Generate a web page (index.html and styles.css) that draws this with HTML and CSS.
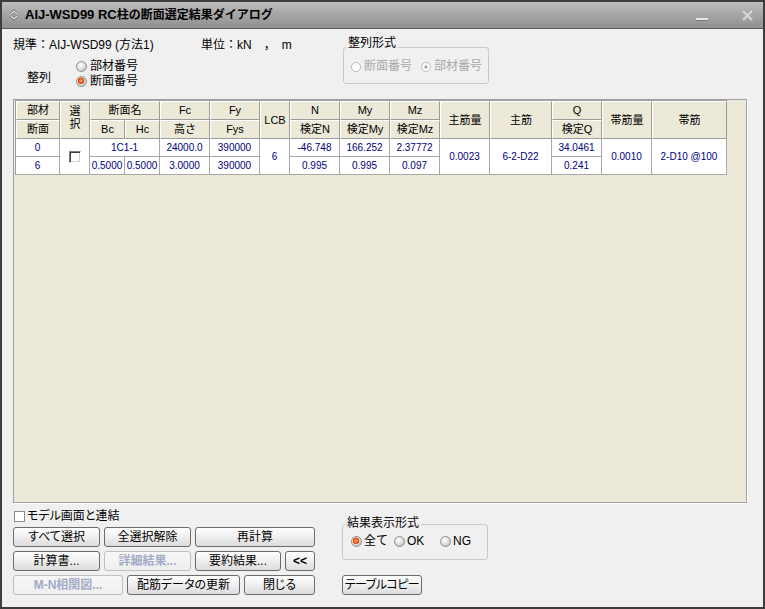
FILE: index.html
```html
<!DOCTYPE html>
<html lang="ja">
<head>
<meta charset="utf-8">
<title>AIJ-WSD99 RC柱の断面選定結果ダイアログ</title>
<link rel="stylesheet" href="styles.css">
</head>
<body>
<div class="window">
  <div class="titlebar">
    <svg class="title-icon" viewBox="0 0 8 12" aria-hidden="true">
      <path d="M1 5L4 2L7 5M1 7L4 10L7 7" fill="none" stroke="#5e5e5e" stroke-width="2.4"/>
      <path d="M1 5L4 2L7 5M1 7L4 10L7 7" fill="none" stroke="#f0f0f0" stroke-width="1.1"/>
    </svg>
    <span class="title-text"><span class="title-lat">AIJ-WSD99 RC</span><span class="title-jp">柱の断面選定結果ダイアログ</span></span>
    <svg class="tb-min" viewBox="0 0 12 12" aria-hidden="true">
      <rect x="0" y="9" width="12" height="2" fill="#e4e4e4"/>
      <rect x="0" y="11" width="12" height="1" fill="#7c7c7c"/>
    </svg>
    <svg class="tb-close" viewBox="0 0 11 11" aria-hidden="true">
      <path d="M1 1L10 10M10 1L1 10" stroke="#c4c4c4" stroke-width="3.4" opacity=".5"/>
      <path d="M1 1L10 10M10 1L1 10" stroke="#dedede" stroke-width="1.5"/>
    </svg>
  </div>

  <div class="content">
    <div class="top">
      <div class="top-left">
        <div class="info-row">
          <span class="std">規準：AIJ-WSD99 (方法1)</span>
          <span>単位：kN　，　m</span>
        </div>
        <div class="sort-row">
          <span class="sort-label">整列</span>
          <div class="radio-col">
            <span class="opt"><span class="radio"></span>部材番号</span>
            <span class="opt"><span class="radio on"></span>断面番号</span>
          </div>
        </div>
      </div>
      <div class="group group-sort">
        <span class="group-title">整列形式</span>
        <div class="radio-grid sort-grid">
          <span class="opt dis"><span class="radio dis"></span>断面番号</span>
          <span class="opt dis"><span class="radio dis on"></span>部材番号</span>
        </div>
      </div>
    </div>

    <div class="grid-area">
      <table class="grid">
        <colgroup>
          <col class="c-id"><col class="c-sel"><col class="c-b"><col class="c-b">
          <col class="c-50"><col class="c-50"><col class="c-lcb"><col class="c-50">
          <col class="c-50"><col class="c-50"><col class="c-50"><col class="c-main">
          <col class="c-50"><col class="c-50"><col class="c-hoop">
        </colgroup>
        <thead>
          <tr>
            <th>部材</th>
            <th rowspan="2" class="th-sel">選<br>択</th>
            <th colspan="2">断面名</th>
            <th>Fc</th>
            <th>Fy</th>
            <th rowspan="2">LCB</th>
            <th>N</th>
            <th>My</th>
            <th>Mz</th>
            <th rowspan="2">主筋量</th>
            <th rowspan="2">主筋</th>
            <th>Q</th>
            <th rowspan="2">帯筋量</th>
            <th rowspan="2">帯筋</th>
          </tr>
          <tr>
            <th>断面</th>
            <th>Bc</th>
            <th>Hc</th>
            <th>高さ</th>
            <th>Fys</th>
            <th>検定N</th>
            <th>検定My</th>
            <th>検定Mz</th>
            <th>検定Q</th>
          </tr>
        </thead>
        <tbody>
          <tr>
            <td>0</td>
            <td rowspan="2"><span class="cb"></span></td>
            <td colspan="2">1C1-1</td>
            <td>24000.0</td>
            <td>390000</td>
            <td rowspan="2">6</td>
            <td>-46.748</td>
            <td>166.252</td>
            <td>2.37772</td>
            <td rowspan="2">0.0023</td>
            <td rowspan="2">6-2-D22</td>
            <td>34.0461</td>
            <td rowspan="2">0.0010</td>
            <td rowspan="2">2-D10 @100</td>
          </tr>
          <tr>
            <td>6</td>
            <td>0.5000</td>
            <td>0.5000</td>
            <td>3.0000</td>
            <td>390000</td>
            <td>0.995</td>
            <td>0.995</td>
            <td>0.097</td>
            <td>0.241</td>
          </tr>
        </tbody>
      </table>
    </div>

    <div class="bottom">
      <div class="bottom-left">
        <label class="check-row"><span class="check"></span>モデル画面と連結</label>
        <div class="btn-rows">
          <div class="btn-row">
            <button class="btn w87">すべて選択</button>
            <button class="btn w87">全選択解除</button>
            <button class="btn w120">再計算</button>
          </div>
          <div class="btn-row">
            <button class="btn w87">計算書...</button>
            <button class="btn w87" disabled>詳細結果...</button>
            <button class="btn w86">要約結果...</button>
            <button class="btn w30 btn-back">&lt;&lt;</button>
          </div>
          <div class="btn-row">
            <button class="btn w110" disabled>M-N相関図...</button>
            <button class="btn w113">配筋データの更新</button>
            <button class="btn w71">閉じる</button>
          </div>
        </div>
      </div>
      <div class="bottom-right">
        <div class="group group-result">
          <span class="group-title">結果表示形式</span>
          <div class="radio-grid result-grid">
            <span class="opt"><span class="radio on"></span>全て</span>
            <span class="opt"><span class="radio"></span>OK</span>
            <span class="opt"><span class="radio"></span>NG</span>
          </div>
        </div>
        <button class="btn btn-copy">テーブルコピー</button>
      </div>
    </div>
  </div>
</div>
</body>
</html>
```

FILE: styles.css
```css
* { box-sizing: border-box; }

body {
  margin: 0;
  font-family: "Liberation Sans", "Noto Sans CJK JP", sans-serif;
  font-size: 12px;
  color: #000;
  background: #fff;
}

.window {
  width: 765px;
  height: 609px;
  border: 2px solid #3d3d3d;
  background: #f0f0f0;
  display: flex;
  flex-direction: column;
  overflow: hidden;
}

/* ---------- title bar ---------- */
.titlebar {
  height: 27px;
  flex: none;
  display: flex;
  align-items: center;
  padding-left: 8px;
  background: linear-gradient(#bebebe, #a7a7a7 45%, #909090);
  border-bottom: 1px solid #5c5c5c;
}
.title-icon { width: 8px; height: 12px; margin-right: 7px; flex: none; }
.title-text {
  flex: 1;
  font-weight: bold;
  line-height: 16px;
  white-space: nowrap;
}
.title-lat { font-size: 13px; }
.title-jp { font-size: 12px; }
.tb-min { width: 12px; height: 12px; margin-right: 34px; flex: none; }
.tb-close { width: 11px; height: 11px; margin-right: 10px; flex: none; }

/* ---------- content ---------- */
.content {
  flex: 1;
  display: flex;
  flex-direction: column;
  padding: 0 16px 0 11px;
}

.top { height: 70px; display: flex; flex: none; }
.top-left { width: 330px; }
.info-row { display: flex; margin-top: 8px; line-height: 16px; white-space: nowrap; }
.std { width: 188px; }
.sort-row { display: flex; margin-top: 6px; }
.sort-label { width: 63px; padding: 12px 0 0 14px; line-height: 15px; }
.radio-col { display: flex; flex-direction: column; }

.opt {
  display: flex;
  align-items: center;
  line-height: 15px;
  white-space: nowrap;
}
.opt.dis { color: #a9a9a9; }

.radio {
  width: 11px;
  height: 11px;
  flex: none;
  margin-right: 3px;
  border-radius: 50%;
  border: 1px solid #8e8e8e;
  background: radial-gradient(circle at 40% 35%, #ffffff 0, #e2e2e2 45%, #b4b4b4 100%);
}
.radio.on {
  background:
    radial-gradient(circle at 45% 42%, #ffb48a 0, #f0601e 2px, #d9480f 3px, rgba(217,72,15,0) 3.6px),
    radial-gradient(circle at 40% 35%, #ffffff 0, #e2e2e2 45%, #b4b4b4 100%);
}
.radio.dis {
  width: 10px;
  height: 10px;
  border-color: #b9b9b9;
  background: #fff;
}
.radio.dis.on {
  background: radial-gradient(circle, #9ea4b8 0, #9ea4b8 1.3px, rgba(158,164,184,0) 2px), #fff;
}

/* group boxes */
.group {
  border: 1px solid #c9c9c9;
  border-radius: 3px;
}
.group-title {
  display: block;
  width: max-content;
  padding: 0 2px;
  background: #f0f0f0;
  line-height: 14px;
  white-space: nowrap;
}
.radio-grid { display: grid; }

.group-sort {
  width: 146px;
  align-self: flex-start;
  margin-top: 18px;
  padding: 0 0 9px 7px;
}
.group-sort .group-title { margin: -12px 0 0 -5px; }
.sort-grid { grid-template-columns: 70px auto; margin-top: 9px; }

/* ---------- grid ---------- */
.grid-area {
  flex: none;
  height: 404px;
  border: 1px solid #a0a0a0;
  box-shadow: 1px 1px 0 #ffffff;
  background: #ece9d8;
  padding: 0 0 0 1px;
}
.grid {
  border-collapse: separate;
  border-spacing: 0;
  table-layout: fixed;
  width: 712px;
  border-top: 1px solid #a0a0a0;
  border-left: 1px solid #a0a0a0;
}
.c-id { width: 44px; }
.c-sel { width: 30px; }
.c-b { width: 35px; }
.c-50 { width: 50px; }
.c-lcb { width: 30px; }
.c-main { width: 62px; }
.c-hoop { width: 75px; }

.grid th {
  background: #ece9d8;
  border-style: solid;
  border-width: 1px;
  border-color: #ffffff #9b9b9b #9b9b9b #ffffff;
  font-weight: normal;
  font-size: 11px;
  line-height: 13px;
  padding: 2px 0;
  text-align: center;
  vertical-align: middle;
  white-space: nowrap;
  overflow: hidden;
}
.grid th.th-sel { vertical-align: top; padding-top: 3px; }

.grid td {
  background: #ffffff;
  border-right: 1px solid #a8a8a8;
  border-bottom: 1px solid #a8a8a8;
  color: #000080;
  font-size: 10px;
  line-height: 13px;
  padding: 2px 0;
  text-align: center;
  vertical-align: middle;
  white-space: nowrap;
  overflow: hidden;
}
.cb {
  display: inline-block;
  width: 12px;
  height: 12px;
  vertical-align: middle;
  border: 1px solid;
  border-color: #808080 #ffffff #ffffff #808080;
  box-shadow: inset 1px 1px 0 #404040, inset -1px -1px 0 #d4d0c8;
  background: #ffffff;
}

/* ---------- bottom ---------- */
.bottom { display: flex; margin-top: 6px; flex: none; }
.bottom-left { width: 302px; display: flex; flex-direction: column; }
.check-row {
  display: flex;
  align-items: center;
  height: 15px;
  padding-left: 1px;
  line-height: 15px;
  white-space: nowrap;
  font-feature-settings: "palt";
}
.check {
  width: 11px;
  height: 11px;
  flex: none;
  margin-right: 2px;
  border: 1px solid #8a8a8a;
  background: #ffffff;
}
.btn-rows { display: flex; flex-direction: column; gap: 4px; margin-top: 3px; }
.btn-row { display: flex; gap: 4px; }

.btn {
  height: 20px;
  padding: 0;
  font-family: inherit;
  font-size: 12px;
  line-height: 18px;
  color: #000;
  border: 1px solid #6b6b6b;
  border-radius: 3px;
  background: linear-gradient(#ffffff, #efefef 50%, #dcdcdc);
  white-space: nowrap;
  font-feature-settings: "palt";
}
.btn:disabled {
  border-color: #bfbfbf;
  background: linear-gradient(#f7f7f7, #efefef);
  color: #a3abc6;
  font-weight: bold;
}
.btn-back { font-weight: bold; }
.w30 { width: 30px; }
.w71 { width: 71px; }
.w86 { width: 86px; }
.w87 { width: 87px; }
.w110 { width: 110px; }
.w113 { width: 113px; }
.w120 { width: 120px; }

.bottom-right { margin-left: 27px; width: 147px; display: flex; flex-direction: column; align-items: flex-start; }
.group-result {
  width: 146px;
  margin-top: 15px;
  padding: 0 0 10px 8px;
}
.group-result .group-title { margin: -9px 0 0 -6px; }
.result-grid { grid-template-columns: 43px 46px auto; margin-top: 4px; }
.result-grid .radio { margin-right: 2px; }
.btn-copy { width: 80px; margin-top: 15px; letter-spacing: -0.5px; }
```
